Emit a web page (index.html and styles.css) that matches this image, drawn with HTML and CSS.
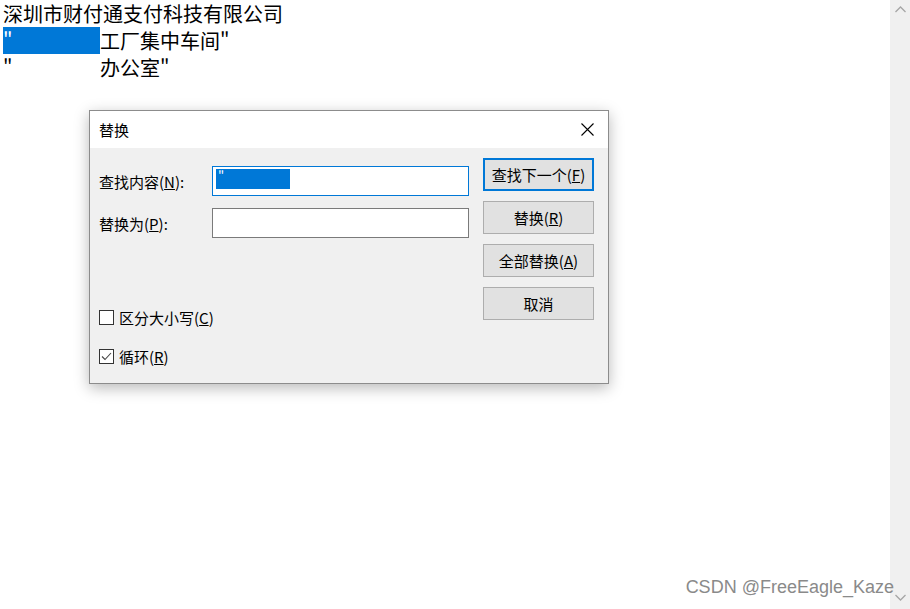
FILE: index.html
```html
<!DOCTYPE html>
<html lang="zh-CN">
<head>
<meta charset="utf-8">
<title>替换</title>
<link rel="stylesheet" href="styles.css">
</head>
<body>
<div class="editor">
  <div class="line">深圳市财付通支付科技有限公司</div>
  <div class="line"><span class="sel">"</span>工厂集中车间"</div>
  <div class="line"><span class="gap">"</span>办公室"</div>
</div>

<div class="scrollbar">
  <svg class="arr" width="11" height="7" viewBox="0 0 11 7"><path d="M0.5 6 L5.5 1 L10.5 6" fill="none" stroke="#a6a6a6" stroke-width="1.3"/></svg>
  <svg class="arr" width="11" height="7" viewBox="0 0 11 7"><path d="M0.5 1 L5.5 6 L10.5 1" fill="none" stroke="#a6a6a6" stroke-width="1.3"/></svg>
</div>

<div class="watermark">CSDN @FreeEagle_Kaze</div>

<div class="dialog">
  <div class="titlebar">
    <span class="title">替换</span>
    <svg class="close" width="13" height="13" viewBox="0 0 13 13"><path d="M0.5 0.5 L12.5 12.5 M12.5 0.5 L0.5 12.5" stroke="#000" stroke-width="1.1"/></svg>
  </div>
  <div class="body">
    <div class="form">
      <div class="row">
        <label class="lbl">查找内容(<u>N</u>):</label>
        <div class="input focus"><span class="hl">"</span></div>
      </div>
      <div class="row">
        <label class="lbl">替换为(<u>P</u>):</label>
        <div class="input"></div>
      </div>
      <div class="checks">
        <div class="check"><span class="box"></span><span>区分大小写(<u>C</u>)</span></div>
        <div class="check"><span class="box"><svg width="13" height="13" viewBox="0 0 13 13"><path d="M2 6.5 L5 9.5 L11 3" fill="none" stroke="#444" stroke-width="1.1"/></svg></span><span>循环(<u>R</u>)</span></div>
      </div>
    </div>
    <div class="buttons">
      <div class="btn default">查找下一个(<u>F</u>)</div>
      <div class="btn">替换(<u>R</u>)</div>
      <div class="btn">全部替换(<u>A</u>)</div>
      <div class="btn">取消</div>
    </div>
  </div>
</div>
</body>
</html>
```

FILE: styles.css
```css
html, body {
  margin: 0;
  padding: 0;
  background: #fff;
  width: 910px;
  height: 609px;
  overflow: hidden;
  font-family: "Noto Sans CJK SC", "Microsoft YaHei", sans-serif;
  color: #000;
}

.editor {
  padding-left: 3px;
  font-size: 20px;
  line-height: 27px;
}

.line {
  height: 27px;
  white-space: nowrap;
}

.sel {
  display: inline-block;
  width: 97px;
  height: 27px;
  vertical-align: top;
  background: #0078d7;
  color: #fff;
}

.gap {
  display: inline-block;
  width: 97px;
  vertical-align: top;
}

.scrollbar {
  position: absolute;
  top: 0;
  right: 0;
  width: 20px;
  height: 609px;
  background: #f0f0f0;
  display: flex;
  flex-direction: column;
  justify-content: space-between;
  align-items: center;
  padding: 6px 0 8px;
  box-sizing: border-box;
}

.watermark {
  position: absolute;
  right: 16px;
  top: 577px;
  font-family: "Liberation Sans", Arial, sans-serif;
  font-size: 18px;
  color: #8a8a8a;
  white-space: nowrap;
}

.dialog {
  position: absolute;
  left: 89px;
  top: 110px;
  width: 518px;
  height: 272px;
  border: 1px solid #8c8c8c;
  background: #f0f0f0;
  box-shadow: 0 4px 14px rgba(0, 0, 0, 0.28);
  font-size: 15px;
  display: flex;
  flex-direction: column;
}

.titlebar {
  height: 37px;
  background: #fff;
  display: flex;
  align-items: center;
  justify-content: space-between;
  padding: 0 14px 0 9px;
}

.title {
  font-size: 15px;
}

.close {
  display: block;
}

.body {
  flex: 1;
  display: flex;
  padding: 10px 14px 0 9px;
}

.form {
  flex: 1;
  padding-top: 8px;
}

.row {
  display: flex;
  align-items: center;
  height: 30px;
  margin-bottom: 12px;
}

.lbl {
  width: 113px;
  flex: none;
  white-space: nowrap;
}

.input {
  width: 252px;
  height: 26px;
  border: 1px solid #7a7a7a;
  background: #fff;
  padding: 2px 0 0 3px;
}

.input.focus {
  border-color: #0078d7;
}

.hl {
  display: block;
  width: 74px;
  height: 20px;
  line-height: 16px;
  background: #0078d7;
  color: #fff;
  font-size: 13px;
  padding-left: 2px;
  box-sizing: border-box;
}

.checks {
  padding-top: 60px;
  display: flex;
  flex-direction: column;
  gap: 24px;
}

.check {
  display: flex;
  align-items: center;
  gap: 5px;
  height: 15px;
  white-space: nowrap;
}

.box {
  width: 13px;
  height: 13px;
  border: 1px solid #333;
  background: #fff;
  display: flex;
}

.buttons {
  width: 111px;
  display: flex;
  flex-direction: column;
  gap: 10px;
}

.btn {
  height: 31px;
  border: 1px solid #adadad;
  background: #e1e1e1;
  display: flex;
  align-items: center;
  justify-content: center;
  white-space: nowrap;
}

.btn.default {
  border: 2px solid #0078d7;
  height: 29px;
}
```
